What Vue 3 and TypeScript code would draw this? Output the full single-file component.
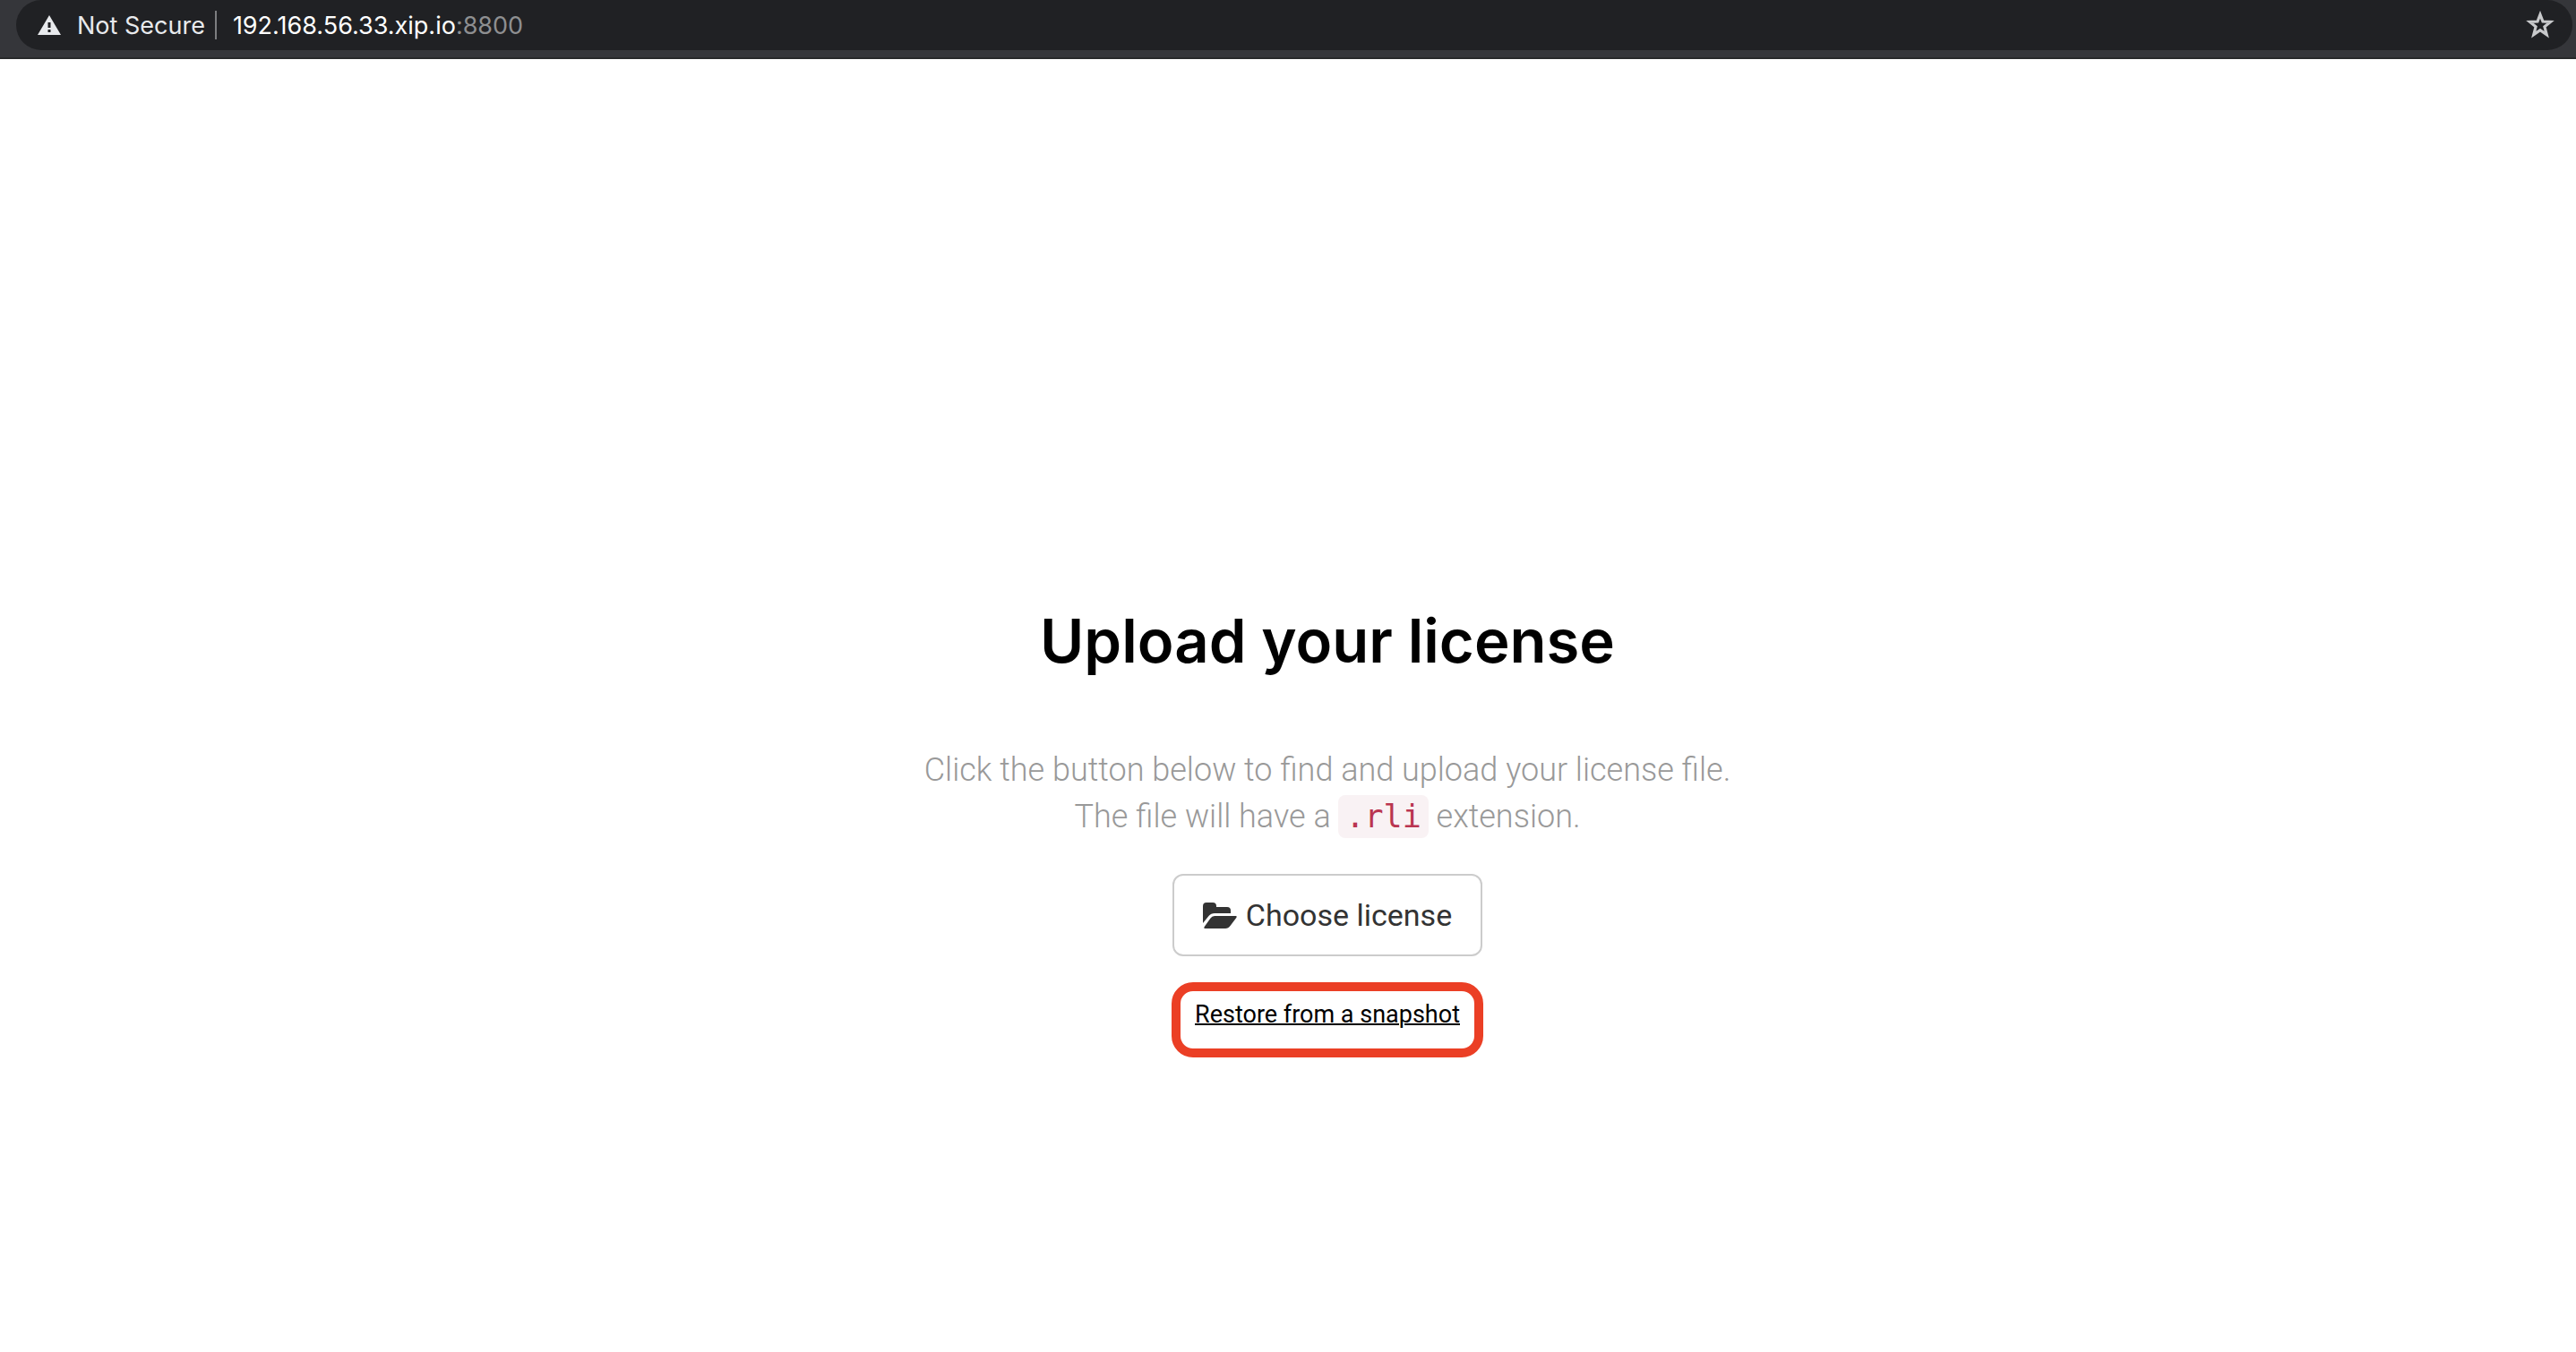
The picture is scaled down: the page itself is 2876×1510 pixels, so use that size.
<script setup lang="ts">
const address = { host: '192.168.56.33.xip.io', port: ':8800' }
const extension = '.rli'
</script>

<template>
  <div class="page">
    <header class="toolbar">
      <div class="omnibox">
        <svg class="warning" viewBox="0 0 26 22" aria-hidden="true">
          <path fill="#e8eaed" fill-rule="evenodd" d="M13 0 26 22H0ZM11.5 8v6h3V8ZM11.5 16v3h3v-3Z" />
        </svg>
        <span class="security">Not Secure</span>
        <span class="divider"></span>
        <span class="address">{{ address.host }}<span class="port">{{ address.port }}</span></span>
        <button class="bookmark" type="button" aria-label="Bookmark this page">
          <svg viewBox="0 0 30 30" aria-hidden="true">
            <path
              fill="none"
              stroke="#c8c9cb"
              stroke-width="3"
              d="M15 4 17.8 11.3 25.8 11.7 19.6 16.7 21.8 25 15 20.4 8.2 25 10.4 16.7 4.2 11.7 12.2 11.3Z"
            />
          </svg>
        </button>
      </div>
    </header>

    <main class="content">
      <h1>Upload your license</h1>
      <p class="lead">
        Click the button below to find and upload your license file.<br />
        The file will have a <code>{{ extension }}</code> extension.
      </p>
      <button class="choose" type="button">
        <svg class="folder" viewBox="0 0 38 29" aria-hidden="true">
          <path
            fill="#333"
            d="M0 23V4Q0 0 4 0H11Q15 0 15 4V5H27Q31 5 31 9V12H13Q9 12 6.500 15Z"
          />
          <path
            fill="#333"
            d="M13 15H36.500Q38.500 15 37.300 17L30.500 26Q28.500 29 25 29H2.500Q0.500 29 1.700 27L8.500 17.500Q10 15 13 15Z"
          />
        </svg>
        <span>Choose license</span>
      </button>
      <div class="highlight">
        <a href="#restore">Restore from a snapshot</a>
      </div>
    </main>
  </div>
</template>

<style>
body {
  margin: 0;
  background: #fff;
}
</style>

<style scoped>
.page {
  font-family: Roboto, 'Liberation Sans', sans-serif;
  color: #000;
}

.toolbar {
  padding: 0 4px 8px 18px;
  background: #35363a;
  border-bottom: 2px solid #28292b;
}

.omnibox {
  display: flex;
  align-items: center;
  height: 56px;
  box-sizing: border-box;
  padding: 0 20px 0 24px;
  border-radius: 28px;
  background: #202124;
  font-family: Inter, 'Liberation Sans', sans-serif;
  font-size: 27px;
  line-height: 32px;
  color: #fff;
}

.warning {
  width: 26px;
  height: 22px;
}

.security,
.address {
  padding-top: 2px;
}

.security {
  margin-left: 18px;
  color: #e8eaed;
}

.divider {
  width: 2px;
  height: 32px;
  margin: 0 18px 0 11px;
  background: #7d7e80;
}

.port {
  color: #8e8f91;
}

.bookmark {
  display: flex;
  margin-left: auto;
  padding: 0;
  border: 0;
  background: none;
}

.bookmark svg {
  width: 32px;
  height: 32px;
}

.content {
  display: flex;
  flex-direction: column;
  align-items: center;
  padding: 610px 0 80px 88px;
}

h1 {
  margin: 0 0 78px;
  font-family: Inter, 'Liberation Sans', sans-serif;
  font-size: 67px;
  font-weight: 600;
  line-height: 80px;
}

.lead {
  margin: 0 0 38px;
  font-size: 36px;
  font-weight: 300;
  line-height: 52px;
  text-align: center;
  color: #999;
}

code {
  padding: 4px 8px;
  border-radius: 8px;
  background: #f9f2f4;
  color: #ba3551;
  font-family: 'DejaVu Sans Mono', monospace;
  font-size: 35px;
}

.choose {
  display: flex;
  align-items: center;
  gap: 10px;
  height: 92px;
  box-sizing: border-box;
  padding: 0 32px;
  border: 2px solid #ccc;
  border-radius: 12px;
  background: #fff;
  color: #333;
  font-family: inherit;
  font-size: 34px;
}

.folder {
  width: 38px;
  height: 29px;
}

.highlight {
  margin-top: 29px;
  padding: 10px 16px 22px;
  border: 10px solid #eb3f25;
  border-radius: 24px;
  font-size: 27px;
  line-height: 32px;
}

.highlight a {
  color: #000;
  text-decoration: underline;
  text-decoration-thickness: 2px;
}
</style>
